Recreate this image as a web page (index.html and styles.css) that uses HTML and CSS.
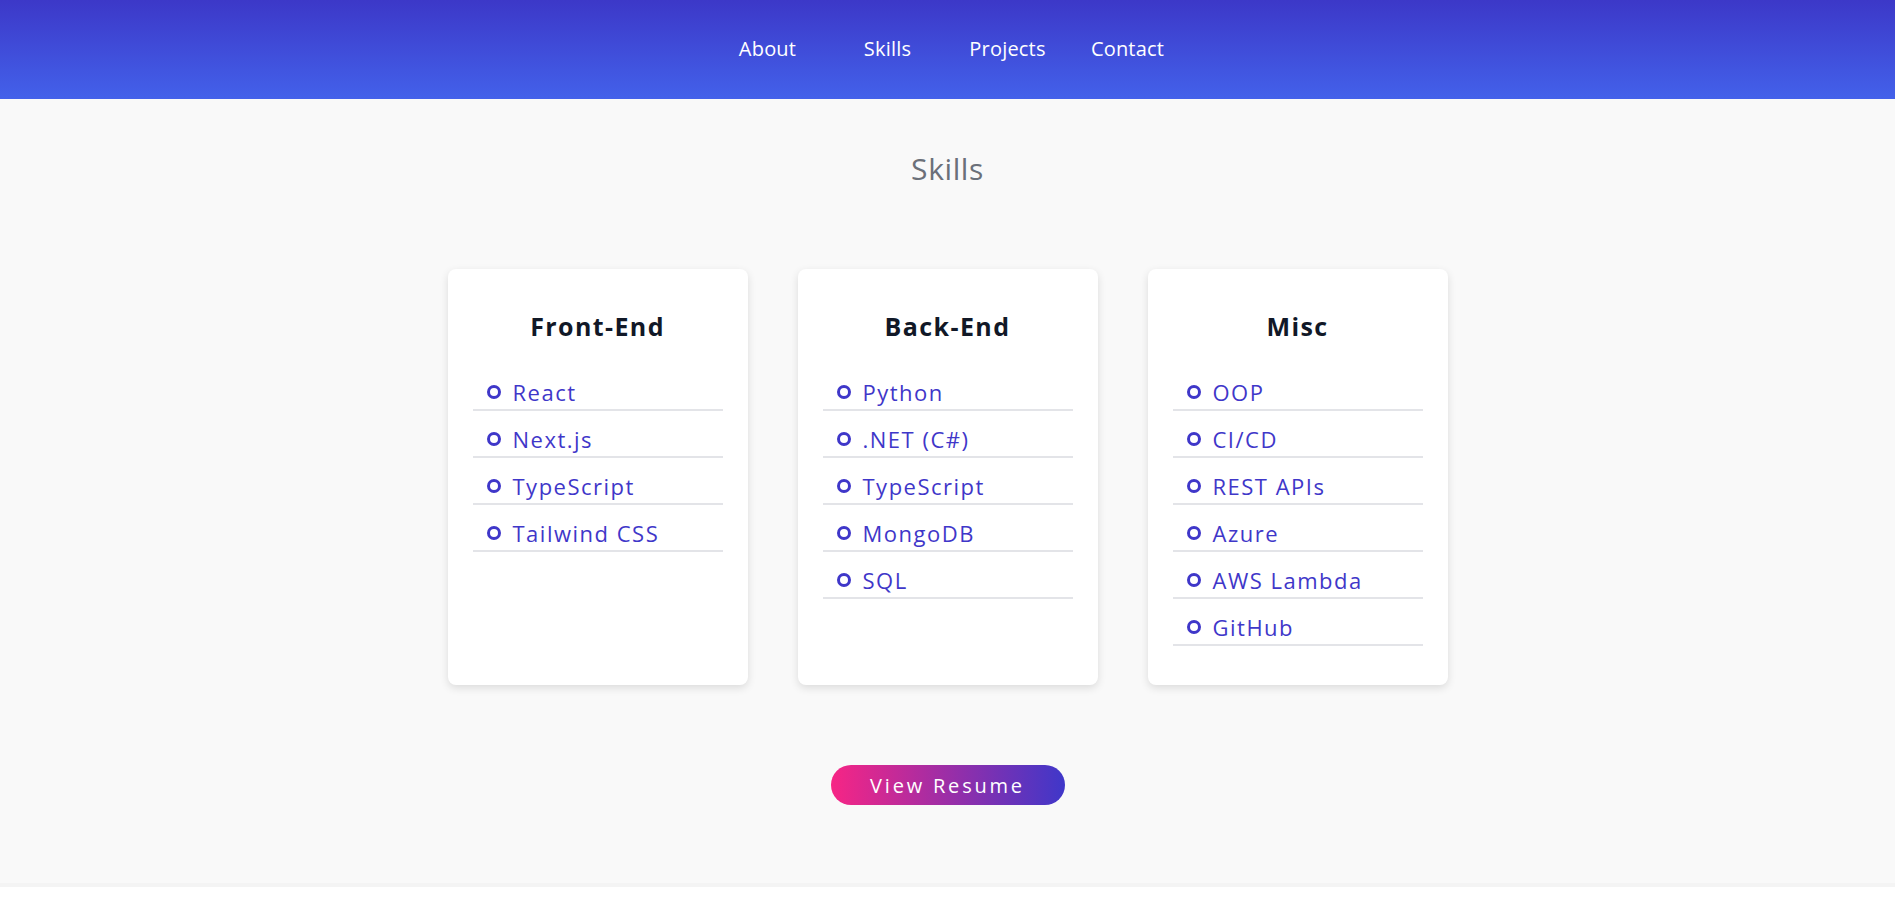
FILE: index.html
```html
<!DOCTYPE html>
<html lang="en">
<head>
<meta charset="utf-8">
<title>Skills</title>
<link rel="stylesheet" href="styles.css">
</head>
<body>
<header class="nav">
  <nav class="nav-links">
    <a class="nav-link" href="#about">About</a>
    <a class="nav-link" href="#skills">Skills</a>
    <a class="nav-link" href="#projects">Projects</a>
    <a class="nav-link" href="#contact">Contact</a>
  </nav>
</header>
<section class="skills" id="skills">
  <h2 class="section-title">Skills</h2>
  <div class="cards">
    <div class="card">
      <h3 class="card-title">Front-End</h3>
      <ul class="skill-list">
        <li class="skill">React</li>
        <li class="skill">Next.js</li>
        <li class="skill">TypeScript</li>
        <li class="skill">Tailwind CSS</li>
      </ul>
    </div>
    <div class="card">
      <h3 class="card-title">Back-End</h3>
      <ul class="skill-list">
        <li class="skill">Python</li>
        <li class="skill">.NET (C#)</li>
        <li class="skill">TypeScript</li>
        <li class="skill">MongoDB</li>
        <li class="skill">SQL</li>
      </ul>
    </div>
    <div class="card">
      <h3 class="card-title">Misc</h3>
      <ul class="skill-list">
        <li class="skill">OOP</li>
        <li class="skill">CI/CD</li>
        <li class="skill">REST APIs</li>
        <li class="skill">Azure</li>
        <li class="skill">AWS Lambda</li>
        <li class="skill">GitHub</li>
      </ul>
    </div>
  </div>
  <div class="actions">
    <a class="resume-btn" href="#resume">View Resume</a>
  </div>
</section>
</body>
</html>
```
FILE: styles.css
```css
* { box-sizing: border-box; }
html, body { margin: 0; padding: 0; background: #ffffff; }
body {
  font-family: "Open Sans", "Liberation Sans", sans-serif;
  color: #111827;
}
a { text-decoration: none; }

.nav {
  height: 99px;
  background: linear-gradient(180deg, #3c38c8 0%, #4361ea 100%);
  display: flex;
  align-items: center;
  justify-content: center;
}
.nav-links {
  display: flex;
  padding-bottom: 2px;
}
.nav-link {
  width: 120px;
  text-align: center;
  color: #ffffff;
  font-size: 20px;
  font-weight: 500;
  letter-spacing: 0.2px;
}

.skills {
  background: #f9f9f9;
  padding: 50px 0 78px;
  border-bottom: 4px solid #f4f4f4;
  display: flex;
  flex-direction: column;
  align-items: center;
}
.section-title {
  margin: 0;
  font-size: 30px;
  font-weight: 400;
  color: #6b7079;
  letter-spacing: 0.6px;
  line-height: 40px;
}
.cards {
  display: flex;
  gap: 50px;
  margin-top: 80px;
}
.card {
  width: 300px;
  background: #ffffff;
  border-radius: 8px;
  box-shadow: 0 3px 8px rgba(0, 0, 0, 0.12);
  padding: 40px 25px 39px;
}
.card-title {
  margin: 0;
  text-align: center;
  font-size: 25px;
  font-weight: 700;
  color: #111827;
  line-height: 34px;
  letter-spacing: 1.4px;
}
.skill-list {
  list-style: none;
  margin: 21px 0 0;
  padding: 0;
}
.skill {
  display: flex;
  align-items: center;
  height: 47px;
  padding: 10px 0 0 14px;
  border-bottom: 2px solid #e3e4e8;
  color: #3f37c9;
  font-size: 22px;
  letter-spacing: 1.5px;
}
.skill::before {
  content: "";
  width: 8px;
  height: 8px;
  border: 3px solid #3f37c9;
  border-radius: 50%;
  margin-right: 12px;
  flex: none;
}

.actions {
  margin-top: 80px;
}
.resume-btn {
  display: flex;
  align-items: center;
  justify-content: center;
  width: 234px;
  height: 40px;
  border-radius: 20px;
  background: linear-gradient(90deg, #f72585 0%, #3f37c9 100%);
  color: #ffffff;
  font-size: 20px;
  letter-spacing: 2.8px;
}
```
